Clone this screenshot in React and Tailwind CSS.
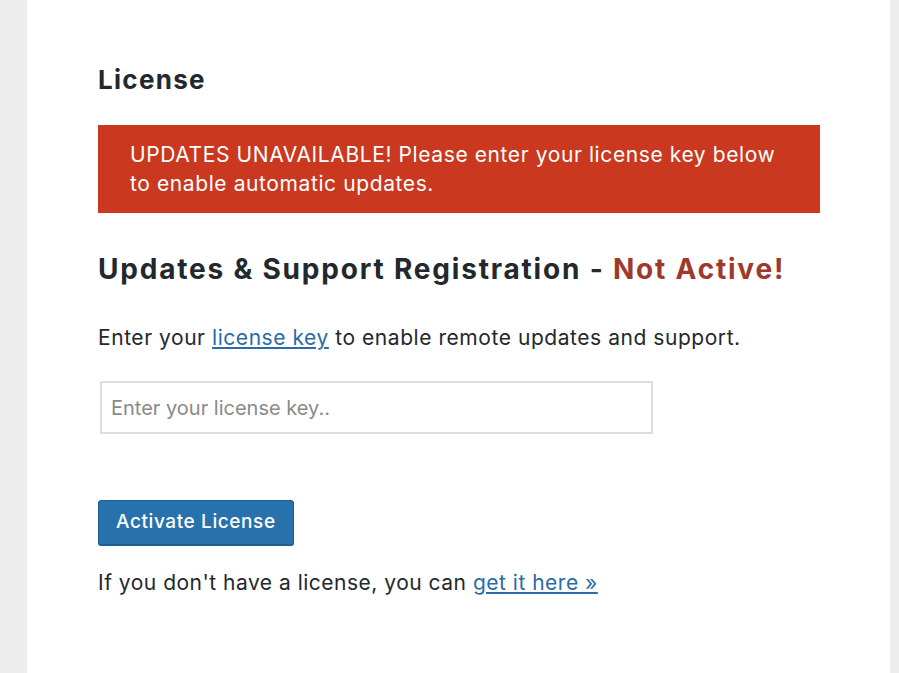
import React from 'react';

export default function App() {
  return (
    <div className="flex h-[673px] w-[899px] bg-[#ededed] text-[#23282d]" style={{ fontFamily: 'Inter, "Liberation Sans", Arial, sans-serif' }}>
      <div className="ml-[27px] mr-[9px] flex-1 bg-white pl-[71px] pr-[70px]">
        <h2 className="mt-[64px] text-[26px] font-bold leading-[32px] tracking-[1.3px]">License</h2>

        <div className="mt-[29px] bg-[#c9381f] px-[32px] py-[15px] text-[21px] leading-[29px] tracking-[0.6px] text-white">
          UPDATES UNAVAILABLE! Please enter your license key below to enable automatic updates.
        </div>

        <h3 className="mt-[38px] text-[28px] font-bold leading-[36px] tracking-[1.8px]">
          Updates &amp; Support Registration - <span className="text-[#9e3a2c]">Not Active!</span>
        </h3>

        <p className="mt-[37px] text-[21px] leading-[28px] tracking-[0.55px]">
          Enter your <a href="#" className="text-[#2a6aa8] underline">license key</a> to enable remote updates and support.
        </p>

        <input
          type="text"
          placeholder="Enter your license key.."
          className="mt-[29px] ml-[2px] block h-[53px] w-[553px] border-2 border-[#dddddd] px-[9px] text-[20px] placeholder:text-[#8a8a8a] outline-none"
        />

        <button className="mt-[66px] h-[45px] rounded-[3px] border border-[#1c5d92] bg-[#2771ad] px-[17px] text-[19px] font-medium tracking-[0.6px] text-white shadow-[0_1px_0_#1c5d92]">
          Activate License
        </button>

        <p className="mt-[24px] text-[21px] leading-[28px] tracking-[0.5px]">
          If you don't have a license, you can <a href="#" className="text-[#2a6aa8] underline">get it here »</a>
        </p>
      </div>
    </div>
  );
}
